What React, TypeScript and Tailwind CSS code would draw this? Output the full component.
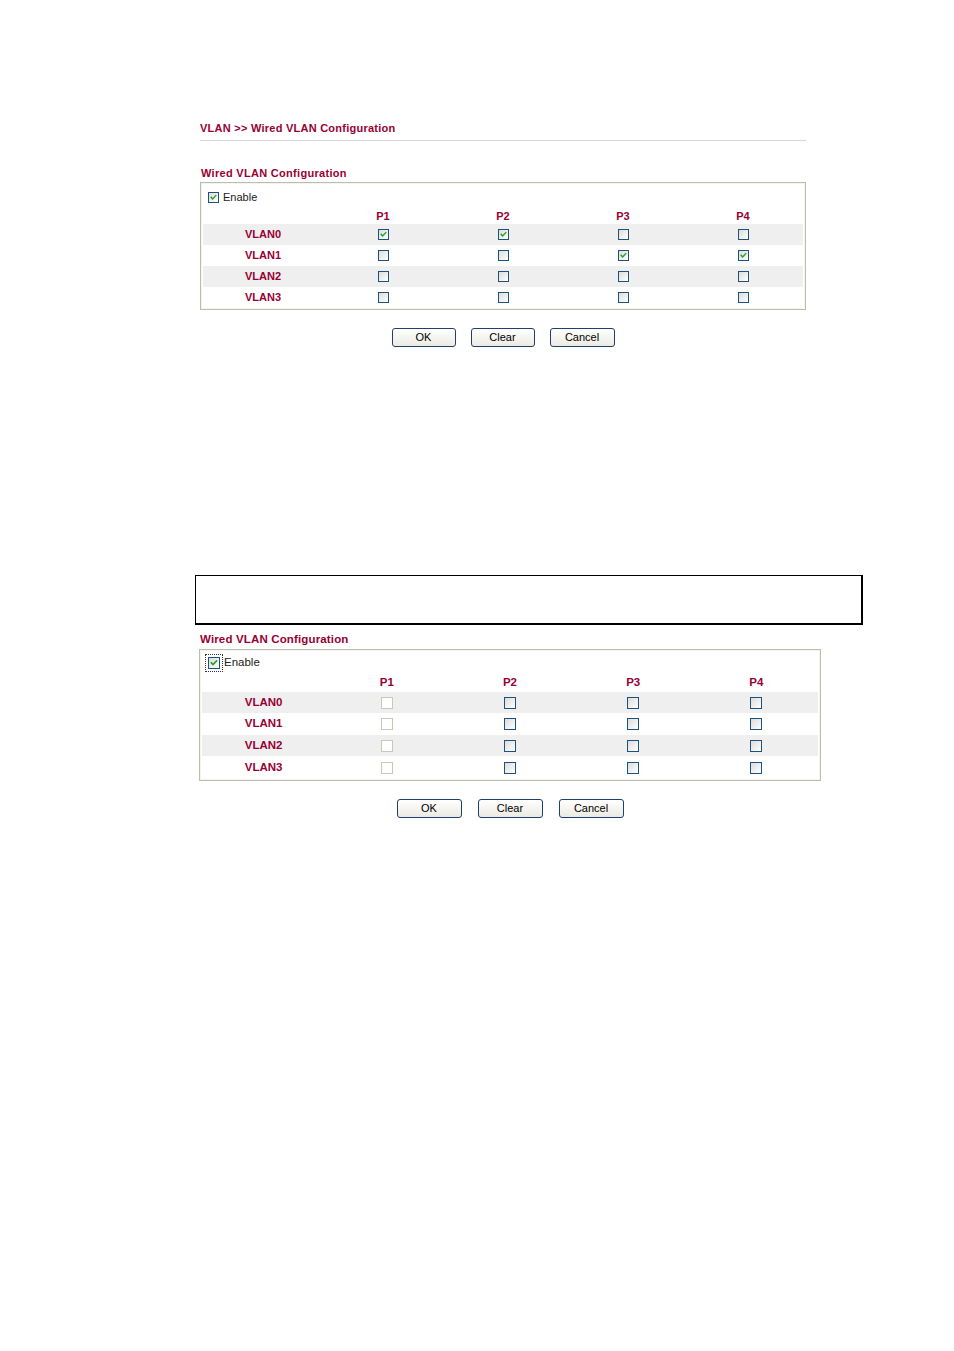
import React from "react";

const RED = "text-[#990033]";

type BoxProps = { checked?: boolean; disabled?: boolean; size?: number };

function Check({ checked = false, disabled = false, size = 11 }: BoxProps) {
  return (
    <span
      className={`relative inline-block border ${
        disabled
          ? "border-[#cac8bb] bg-white"
          : "border-[#1c5180] bg-gradient-to-br from-[#dcdcd7] to-white"
      }`}
      style={{ width: size, height: size }}
    >
      {checked && (
        <svg
          viewBox="0 0 11 11"
          className="absolute inset-0 h-full w-full"
          fill="none"
        >
          <path
            d="M2.6 5.2 L4.4 7.2 L8.3 3.2"
            stroke="#21a121"
            strokeWidth="1.7"
            strokeLinecap="square"
          />
        </svg>
      )}
    </span>
  );
}

function Btn({ label, w }: { label: string; w: string }) {
  return (
    <button
      className={`${w} h-[19px] rounded-[3px] border border-[#1f3f6e] bg-gradient-to-b from-white to-[#ebeae2] text-[11px] leading-none text-black`}
    >
      {label}
    </button>
  );
}

type Grid = boolean[][];

function ConfigBox({
  grid,
  disableP1,
  focused,
  size,
  font,
  rowHeights,
  headerH,
  padTop,
}: {
  grid: Grid;
  disableP1?: boolean;
  focused?: boolean;
  size: number;
  font: string;
  rowHeights: string[];
  headerH: string;
  padTop: string;
}) {
  return (
    <div
      className={`border border-[#bdbcae] px-[2px] ${padTop} pb-[1px] shadow-[inset_0_0_0_1px_#f4f4ee]`}
    >
      <div className={`flex h-[22px] items-center pl-[5px] ${font}`}>
        {focused ? (
          <span className="mr-[1px] flex items-center border border-dotted border-[#333] p-[2px] -ml-[2px]">
            <Check checked size={size} />
          </span>
        ) : (
          <span className="mr-[4px] flex items-center">
            <Check checked size={size} />
          </span>
        )}
        <span className="text-[#222]">Enable</span>
      </div>
      <div className={`grid grid-cols-5 ${headerH} items-start ${font} font-bold ${RED}`}>
        <span />
        {["P1", "P2", "P3", "P4"].map((p) => (
          <span key={p} className="text-center">
            {p}
          </span>
        ))}
      </div>
      {grid.map((row, i) => (
        <div
          key={i}
          className={`grid grid-cols-5 items-center ${rowHeights[i]} ${
            i % 2 === 0 ? "bg-[#efefef]" : "bg-white"
          }`}
        >
          <span className={`text-center ${font} font-bold ${RED}`}>
            VLAN{i}
          </span>
          {row.map((c, j) => (
            <span key={j} className="flex items-center justify-center">
              <Check
                checked={c}
                disabled={disableP1 && j === 0}
                size={size}
              />
            </span>
          ))}
        </div>
      ))}
    </div>
  );
}

export default function App() {
  const first: Grid = [
    [true, true, false, false],
    [false, false, true, true],
    [false, false, false, false],
    [false, false, false, false],
  ];
  const second: Grid = [
    [false, false, false, false],
    [false, false, false, false],
    [false, false, false, false],
    [false, false, false, false],
  ];

  return (
    <div
      className="min-h-[1351px] w-[954px] bg-white pt-[121px]"
      style={{ fontFamily: '"Liberation Sans", Arial, sans-serif' }}
    >
      <div className="ml-[200px] w-[606px]">
        <div
          className={`h-[20px] border-b border-[#d6d6d6] text-[11px] font-bold leading-[14px] tracking-[0.25px] ${RED}`}
        >
          VLAN &gt;&gt; Wired VLAN Configuration
        </div>
        <div
          className={`mt-[25px] pl-[1px] text-[11px] font-bold leading-[15px] tracking-[0.3px] ${RED}`}
        >
          Wired VLAN Configuration
        </div>
        <div className="mt-[1px]">
          <ConfigBox
            grid={first}
            size={11}
            font="text-[11px]"
            rowHeights={["h-[21px]", "h-[21px]", "h-[21px]", "h-[21px]"]}
            headerH="h-[16px]"
            padTop="pt-[3px]"
          />
        </div>
        <div className="mt-[18px] flex justify-center gap-[15px]">
          <Btn label="OK" w="w-[64px]" />
          <Btn label="Clear" w="w-[64px]" />
          <Btn label="Cancel" w="w-[65px]" />
        </div>
      </div>

      <div className="ml-[195px] mt-[228px] h-[50px] w-[668px] border-[1.5px] border-b-2 border-r-2 border-black bg-white" />

      <div className="ml-[199px] w-[622px]">
        <div
          className={`mt-[7px] pl-[1px] text-[11.5px] font-bold leading-[15px] tracking-[0.15px] ${RED}`}
        >
          Wired VLAN Configuration
        </div>
        <div className="mt-[2px]">
          <ConfigBox
            grid={second}
            disableP1
            focused
            size={12}
            font="text-[11.5px]"
            rowHeights={["h-[21px]", "h-[22px]", "h-[21px]", "h-[23px]"]}
            headerH="h-[18px]"
            padTop="pt-[2px]"
          />
        </div>
        <div className="mt-[18px] flex justify-center gap-[16px]">
          <Btn label="OK" w="w-[65px]" />
          <Btn label="Clear" w="w-[65px]" />
          <Btn label="Cancel" w="w-[65px]" />
        </div>
      </div>
    </div>
  );
}
